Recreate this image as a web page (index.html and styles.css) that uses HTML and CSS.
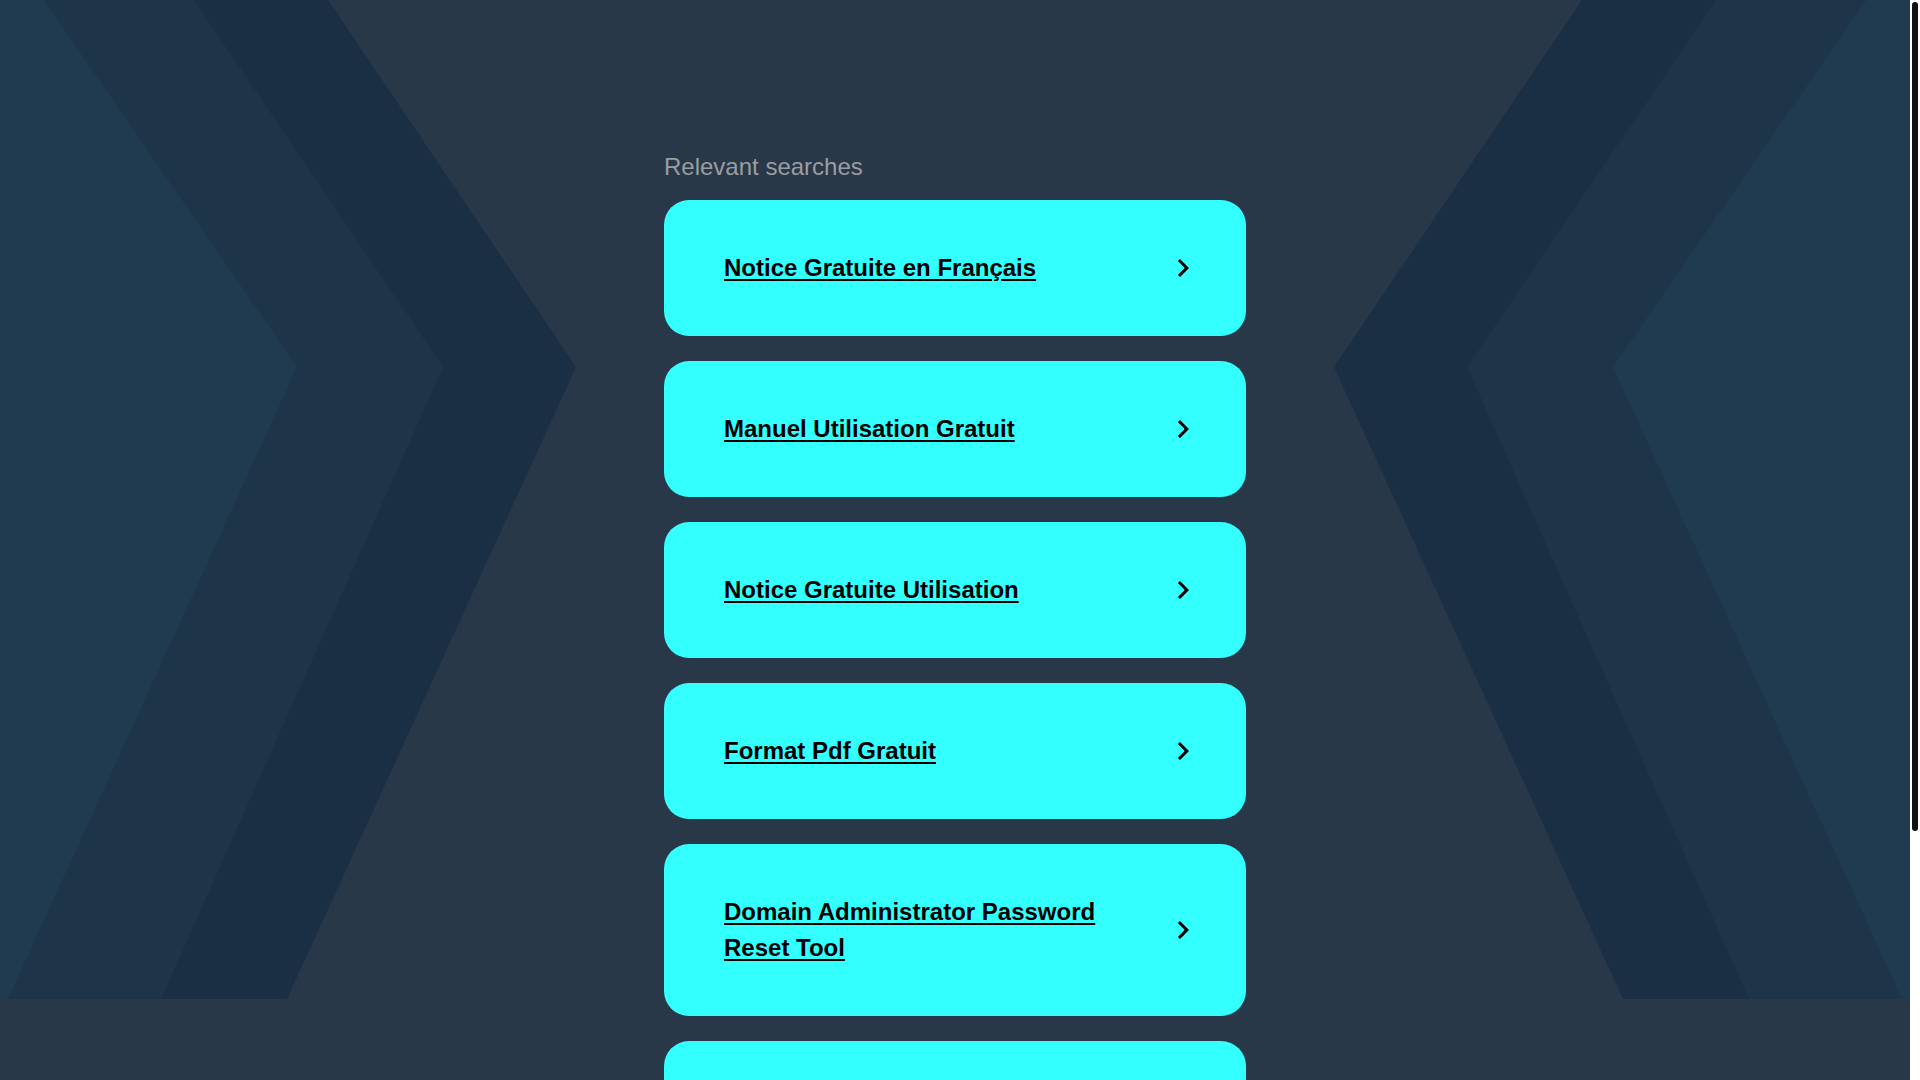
FILE: index.html
```html
<!DOCTYPE html>
<html lang="en">
<head>
<meta charset="utf-8">
<title>Relevant searches</title>
<link rel="stylesheet" href="styles.css">
</head>
<body>
<main class="wrap">
  <h2 class="heading">Relevant searches</h2>
  <div class="list">
    <a class="card" href="#"><span class="label">Notice Gratuite en Français</span><svg class="chev" viewBox="0 0 24 24"><path d="M10 6L8.59 7.41 13.17 12l-4.58 4.59L10 18l6-6z"/></svg></a>
    <a class="card" href="#"><span class="label">Manuel Utilisation Gratuit</span><svg class="chev" viewBox="0 0 24 24"><path d="M10 6L8.59 7.41 13.17 12l-4.58 4.59L10 18l6-6z"/></svg></a>
    <a class="card" href="#"><span class="label">Notice Gratuite Utilisation</span><svg class="chev" viewBox="0 0 24 24"><path d="M10 6L8.59 7.41 13.17 12l-4.58 4.59L10 18l6-6z"/></svg></a>
    <a class="card" href="#"><span class="label">Format Pdf Gratuit</span><svg class="chev" viewBox="0 0 24 24"><path d="M10 6L8.59 7.41 13.17 12l-4.58 4.59L10 18l6-6z"/></svg></a>
    <a class="card" href="#"><span class="label">Domain Administrator Password Reset Tool</span><svg class="chev" viewBox="0 0 24 24"><path d="M10 6L8.59 7.41 13.17 12l-4.58 4.59L10 18l6-6z"/></svg></a>
    <a class="card" href="#"><span class="label">Mode d'Emploi Gratuit</span><svg class="chev" viewBox="0 0 24 24"><path d="M10 6L8.59 7.41 13.17 12l-4.58 4.59L10 18l6-6z"/></svg></a>
    <a class="card" href="#"><span class="label">Guide Utilisateur en Ligne</span><svg class="chev" viewBox="0 0 24 24"><path d="M10 6L8.59 7.41 13.17 12l-4.58 4.59L10 18l6-6z"/></svg></a>
  </div>
</main>
<div class="scroll-thumb"></div>
</body>
</html>
```

FILE: styles.css
```css
html {
  margin: 0;
  padding: 0;
  background: #ffffff;
}

body {
  margin: 0 10px 0 0;
  padding: 0;
  min-height: 100vh;
  font-family: "Liberation Sans", Arial, sans-serif;
  background-color: #283848;
  background-image: url("data:image/svg+xml,%3Csvg xmlns='http://www.w3.org/2000/svg' viewBox='0 0 1910 999' preserveAspectRatio='none'%3E%3Cpolygon fill='%231a2f44' points='0,0 328,0 576,367 287,999 0,999'/%3E%3Cpolygon fill='%231e3449' points='0,0 194,0 443,367 161,999 0,999'/%3E%3Cpolygon fill='%23203a50' points='0,0 44,0 297,367 8,999 0,999'/%3E%3Cpolygon fill='%231a2f44' points='1910,0 1582,0 1334,367 1623,999 1910,999'/%3E%3Cpolygon fill='%231e3449' points='1910,0 1716,0 1467,367 1749,999 1910,999'/%3E%3Cpolygon fill='%23203a50' points='1910,0 1866,0 1613,367 1902,999 1910,999'/%3E%3C/svg%3E");
  background-repeat: no-repeat;
  background-position: top left;
  background-size: 100% 999px;
}

.scroll-thumb {
  position: fixed;
  top: 2px;
  right: 2px;
  width: 6px;
  height: 829px;
  background: #111111;
  border-radius: 3px;
}

.wrap {
  width: 582px;
  margin: 0 auto;
  padding: 152px 0 62px;
}

.heading {
  margin: 0 0 18px;
  font-size: 24px;
  line-height: 30px;
  font-weight: normal;
  color: #9a9da2;
}

.list {
  display: flex;
  flex-direction: column;
  gap: 25px;
}

.card {
  display: flex;
  align-items: center;
  gap: 20px;
  padding: 50px 45px 50px 60px;
  background: #33ffff;
  border-radius: 25px;
  color: #000000;
  text-decoration: none;
}

.label {
  flex: 1;
  font-size: 24px;
  line-height: 36px;
  font-weight: bold;
  text-decoration: underline;
  text-decoration-thickness: 2px;
  text-underline-offset: 3px;
}

.chev {
  width: 36px;
  height: 36px;
  flex: none;
  fill: #000000;
}
```
